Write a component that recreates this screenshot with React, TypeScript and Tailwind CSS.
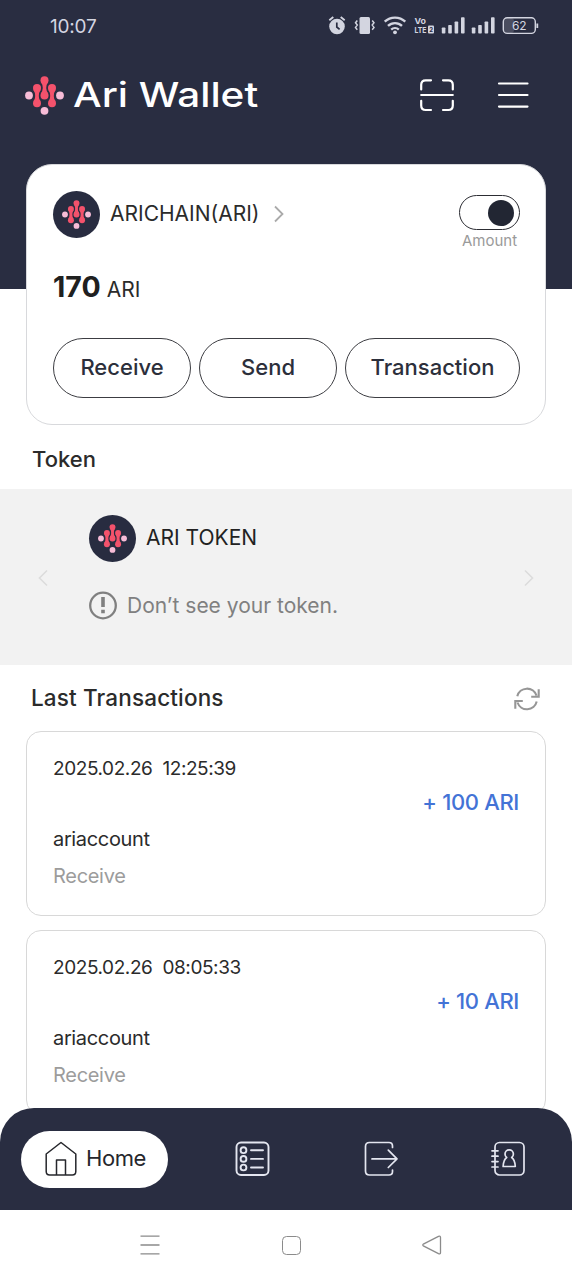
import type { ReactNode } from "react";

const transactions = [
  { date: "2025.02.26", time: "12:25:39", amount: "+ 100 ARI", account: "ariaccount", type: "Receive" },
  { date: "2025.02.26", time: "08:05:33", amount: "+ 10 ARI", account: "ariaccount", type: "Receive" },
];

function AriMark({ className }: { className?: string }) {
  return (
    <svg viewBox="0 0 39 39" className={className}>
      <g fill="#f4526c">
        {[
          { x: 12, y: 12 },
          { x: 19.5, y: 4.2 },
          { x: 27, y: 12 },
        ].map(({ x, y }) => (
          <g key={x} transform={`translate(${x} ${y})`}>
            <circle r="4" />
            <circle cy="15.2" r="4" />
            <path d="M-3.5 1.9Q0 7.6-3.5 13.3H3.5Q0 7.6 3.5 1.9Z" />
            <path d="M-1.4 2h2.8v11h-2.8z" />
          </g>
        ))}
      </g>
      <g fill="#f7bcd7">
        <circle cx="4" cy="19.5" r="3.9" />
        <circle cx="35" cy="19.5" r="3.9" />
        <circle cx="19.5" cy="34.8" r="3.9" />
      </g>
    </svg>
  );
}

function AriBadge() {
  return (
    <div className="flex size-[47px] items-center justify-center rounded-full bg-[#282c40]">
      <AriMark className="size-[29px]" />
    </div>
  );
}

function StatusBar() {
  return (
    <div className="flex h-[52px] items-center pl-[50px] text-[#d3d5e0]">
      <span className="w-[278px] text-[19px] leading-none tracking-[-0.2px]">10:07</span>
      <svg width="212" height="22" viewBox="328 15 212 22" fill="none" stroke="currentColor">
        {/* alarm */}
        <circle cx="337" cy="26.5" r="7.8" fill="currentColor" stroke="none" />
        <path d="M329.3 20.3l4-3.3M344.7 20.3l-4-3.3" strokeWidth="1.8" />
        <path d="M336.8 22.5v4.5l2.8 2.3" stroke="#282c40" strokeWidth="1.7" />
        {/* vibrate */}
        <rect x="359.5" y="17" width="10.5" height="17" rx="1.5" fill="currentColor" stroke="none" />
        <path d="M357.3 20.5l-1.8 2.3 1.8 2.3-1.8 2.3 1.8 2.3M372.2 20.5l1.8 2.3-1.8 2.3 1.8 2.3-1.8 2.3" strokeWidth="1.5" />
        {/* wifi */}
        <path d="M384.7 21.7a15 15 0 0 1 20.6 0M388 25.9a10 10 0 0 1 14 0M391.2 29.6a5.5 5.5 0 0 1 7.6 0" strokeWidth="2.3" />
        <circle cx="395" cy="32.3" r="1.9" fill="currentColor" stroke="none" />
        {/* volte */}
        <g fill="currentColor" stroke="none" className="font-bold">
          <text x="414.5" y="23.7" fontSize="8" textLength="11.5" lengthAdjust="spacingAndGlyphs">Vo</text>
          <text x="414.5" y="33.3" fontSize="8" textLength="12" lengthAdjust="spacingAndGlyphs">LTE</text>
          <rect x="428" y="25.5" width="6" height="8" rx="1" />
          <text x="429.2" y="31.9" fontSize="6" fill="#282c40">2</text>
        </g>
        {/* signal */}
        <g fill="currentColor" stroke="none">
          {[441.8, 471.8].map((x) => (
            <g key={x} transform={`translate(${x} 0)`}>
              <rect y="27.5" width="3.6" height="6" rx="0.8" />
              <rect x="6.4" y="25" width="3.6" height="8.5" rx="0.8" />
              <rect x="12.8" y="21.5" width="3.6" height="12" rx="0.8" />
              <rect x="19.2" y="17.3" width="3.6" height="16.2" rx="0.8" />
            </g>
          ))}
        </g>
        {/* battery */}
        <rect x="504" y="18" width="10" height="15" rx="3" fill="#4a4d5f" stroke="none" />
        <rect x="503.3" y="17.8" width="32" height="15.6" rx="4" strokeWidth="1.4" />
        <path d="M537.3 23.5v4.5" strokeWidth="1.8" />
        <text x="519.3" y="30" fontSize="12" textAnchor="middle" fill="currentColor" stroke="none">62</text>
      </svg>
    </div>
  );
}

function Header() {
  return (
    <header className="h-[289px] shrink-0 bg-[#292d41]">
      <StatusBar />
      <div className="flex h-[86px] items-center pl-[25px]">
        <AriMark className="size-[39px]" />
        <h1 className="ml-[9px] w-[343px] origin-left scale-x-[1.19] text-[34px] leading-none font-medium whitespace-nowrap text-white">
          Ari Wallet
        </h1>
        <svg width="120" height="40" viewBox="415 75 120 40" fill="none" stroke="#fff" strokeWidth="2.2" strokeLinecap="round" className="-ml-px">
          <path d="M421.2 89.5v-4.7q0-4.5 4.5-4.5h5.3M443 80.3h5.3q4.5 0 4.5 4.5v4.7M421.2 100.8v4.7q0 4.5 4.5 4.5h5.3M443 110h5.3q4.5 0 4.5-4.5v-4.7M421.2 95h31.6" />
          <path d="M499 83.5h28.5M499 95h28.5M499 106.6h28.5" />
        </svg>
      </div>
    </header>
  );
}

function Action({ className, children }: { className: string; children: ReactNode }) {
  return (
    <button className={`h-[60px] rounded-full border-[1.5px] border-[#3c3d42] pb-px text-[22px] leading-none font-medium text-[#2c2f3b] ${className}`}>
      {children}
    </button>
  );
}

function BalanceCard() {
  return (
    <section className="mx-[26px] -mt-[125px] h-[261px] shrink-0 rounded-[26px] border-[1.5px] border-[#d8d9dc] bg-white pt-[26px] pr-[25px] pl-[26px]">
      <div className="flex h-[59px] items-start">
        <AriBadge />
        <span className="mt-[12px] ml-[10px] text-[21px] leading-none text-[#2b2b2b]">ARICHAIN(ARI)</span>
        <svg width="12" height="18" viewBox="0 0 12 18" fill="none" stroke="#aaa" strokeWidth="1.8" className="mt-[14px] ml-[13px]">
          <path d="M2 1.5l7.5 7.5L2 16.5" />
        </svg>
        <div className="mt-[4px] ml-auto flex flex-col items-center">
          <div className="flex h-[35px] w-[61px] items-center justify-end rounded-full border-[1.5px] border-[#2c2d33] pr-[5px]">
            <div className="size-[26px] rounded-full bg-[#222633]" />
          </div>
          <span className="mt-[3px] text-[15px] leading-none text-[#9a9a9a]">Amount</span>
        </div>
      </div>
      <p className="mt-[23px] flex items-baseline gap-[6px] leading-none text-[#202020]">
        <span className="text-[28.5px] font-bold">170</span>
        <span className="text-[21px] text-[#2b2b2b]">ARI</span>
      </p>
      <div className="mt-[36px] flex gap-[8px]">
        <Action className="w-[138px]">Receive</Action>
        <Action className="w-[138px]">Send</Action>
        <Action className="flex-1">Transaction</Action>
      </div>
    </section>
  );
}

function TokenSection() {
  return (
    <section className="shrink-0">
      <h2 className="flex h-[64px] items-center pt-[4px] pl-[32px] text-[22px] font-medium text-[#2b2b2b]">Token</h2>
      <div className="flex h-[176px] bg-[#f2f2f2]">
        <svg width="12" height="18" viewBox="0 0 12 18" fill="none" stroke="#dcdcdc" strokeWidth="1.6" className="mt-[80px] ml-[37px]">
          <path d="M10 1.5L2.5 9l7.5 7.5" />
        </svg>
        <div className="ml-[40px] flex flex-col pt-[26px]">
          <div className="flex items-center gap-[10px]">
            <AriBadge />
            <span className="pb-[2px] text-[21px] leading-none text-[#222]">ARI TOKEN</span>
          </div>
          <div className="mt-[29px] flex items-center gap-[10px] text-[#808080]">
            <svg width="28" height="29" viewBox="0 0 28 29" fill="none" stroke="currentColor">
              <circle cx="14" cy="14.5" r="12.8" strokeWidth="2.3" />
              <path d="M14 6v10M14 18.7v3.5" strokeWidth="3.6" />
            </svg>
            <span className="pb-px text-[21px] leading-none">Don’t see your token.</span>
          </div>
        </div>
        <svg width="12" height="18" viewBox="0 0 12 18" fill="none" stroke="#dcdcdc" strokeWidth="1.6" className="mt-[80px] mr-[37px] ml-auto">
          <path d="M2 1.5L9.5 9 2 16.5" />
        </svg>
      </div>
    </section>
  );
}

function TransactionCard({ tx }: { tx: (typeof transactions)[number] }) {
  return (
    <li className="flex h-[185px] shrink-0 flex-col rounded-[15px] border-[1.5px] border-[#d8d8d8] px-[26px] pt-[26px] leading-none">
      <p className="flex h-[20px] items-center gap-[10px] text-[19px] tracking-[-0.42px] text-[#2b2b2b]">
        <span>{tx.date}</span>
        <span>{tx.time}</span>
      </p>
      <p className="mt-[13px] flex h-[22px] items-center justify-end text-[22px] font-medium tracking-[-0.35px] text-[#4373d6]">{tx.amount}</p>
      <p className="mt-[16px] flex h-[20px] items-center text-[20px] tracking-[-0.35px] text-[#2b2b2b]">{tx.account}</p>
      <p className="mt-[17px] flex h-[20px] items-center text-[20px] tracking-[-0.3px] text-[#9c9c9c]">{tx.type}</p>
    </li>
  );
}

function LastTransactions() {
  return (
    <section className="flex flex-col">
      <div className="flex h-[66px] items-center justify-between pt-px pr-[31px] pl-[31px]">
        <h2 className="text-[22.5px] leading-none font-medium tracking-[0.15px] text-[#2b2b2b]">Last Transactions</h2>
        <svg width="28" height="24" viewBox="0 0 28 24" fill="none" stroke="#969696" strokeWidth="2.1">
          <path d="M4.3 9.3A10 10 0 0 1 23.5 8.5M25.7 2.2V9.8H18.2M23.7 14.5A10 10 0 0 1 4.5 15.5M2.3 21.7V14H9.8" />
        </svg>
      </div>
      <ul className="flex flex-col gap-[14px] px-[26px]">
        {transactions.map((tx) => (
          <TransactionCard key={tx.time} tx={tx} />
        ))}
      </ul>
    </section>
  );
}

function BottomNav() {
  return (
    <nav className="relative -mt-[40px] flex h-[102px] shrink-0 items-center rounded-t-[34px] bg-[#292d41] pl-[21px] text-[#e4e6f0]">
      <div className="flex h-[57px] w-[147px] items-center rounded-full bg-white pl-[24px] text-[#26272c]">
        <svg width="32" height="36" viewBox="0 0 32 36" fill="none" stroke="currentColor" strokeWidth="1.5" strokeLinejoin="round">
          <path d="M1.2 13L16 1.5 30.8 13V30.5q0 3.5-3.5 3.5H4.7q-3.5 0-3.5-3.5ZM11.5 34V19H20.5V34" />
        </svg>
        <span className="mb-[2px] ml-[9px] text-[22px] leading-none tracking-[-0.4px]">Home</span>
      </div>
      <svg width="36" height="36" viewBox="0 0 36 36" fill="none" stroke="currentColor" strokeWidth="1.9" strokeLinecap="round" className="ml-[67px]">
        <rect x="1.5" y="1.5" width="32" height="32.5" rx="4.5" />
        <circle cx="8.5" cy="9.2" r="2.9" />
        <circle cx="8.5" cy="17.9" r="2.9" />
        <circle cx="8.5" cy="26.5" r="2.9" />
        <path d="M16 9.2h12M16 17.9h12M16 26.5h12" />
      </svg>
      <svg width="36" height="36" viewBox="0 0 36 36" fill="none" stroke="currentColor" strokeWidth="1.7" strokeLinecap="round" strokeLinejoin="round" className="ml-[93px]">
        <path d="M28.5 6.5V5q0-3.5-3.5-3.5H5.5Q1.5 1.5 1.5 5.5V30q0 4 4 4H25q3.5 0 3.5-3.5V29M8 17.9H32.5M24.3 9.2L33 17.9 24.3 26.5" />
      </svg>
      <svg width="36" height="36" viewBox="0 0 36 36" fill="none" stroke="currentColor" strokeWidth="1.7" strokeLinecap="round" strokeLinejoin="round" className="ml-[90px]">
        <rect x="5" y="1.5" width="29" height="32.5" rx="4.5" />
        <path d="M2 9.8h6M2 15.2h6M2 20.6h6M2 26h6" />
        <path d="M16.7 16.5Q15 15.3 15 13a4.2 4.2 0 0 1 8.4 0Q23.4 15.3 21.7 16.5C24.5 18.3 25 21 25.3 25.5H13.1C13.4 21 14 18.3 16.7 16.5Z" />
      </svg>
    </nav>
  );
}

function SystemBar() {
  return (
    <div className="flex h-[70px] shrink-0 items-center bg-white pl-[140px] text-[#8b8b8b]">
      <svg width="20" height="20" viewBox="0 0 20 20" stroke="currentColor" strokeWidth="1.3">
        <path d="M.5 1.2h19M.5 10h19M.5 18.8h19" />
      </svg>
      <div className="ml-[122px] size-[19px] rounded-[4.5px] border-[1.5px] border-current" />
      <svg width="20" height="20" viewBox="0 0 20 20" fill="none" stroke="currentColor" strokeWidth="1.3" strokeLinejoin="round" className="ml-[121px]">
        <path d="M1.8 8.8L16.5 1.3Q18.5.5 18.5 2.5V17.5Q18.5 19.5 16.5 18.7L1.8 11.2Q-.2 10 1.8 8.8Z" />
      </svg>
    </div>
  );
}

export default function App() {
  return (
    <div className="flex h-[1280px] w-[572px] flex-col overflow-hidden bg-white font-['Inter',sans-serif]">
      <main className="flex h-[1148px] shrink-0 flex-col overflow-hidden">
        <Header />
        <BalanceCard />
        <TokenSection />
        <LastTransactions />
      </main>
      <BottomNav />
      <SystemBar />
    </div>
  );
}
